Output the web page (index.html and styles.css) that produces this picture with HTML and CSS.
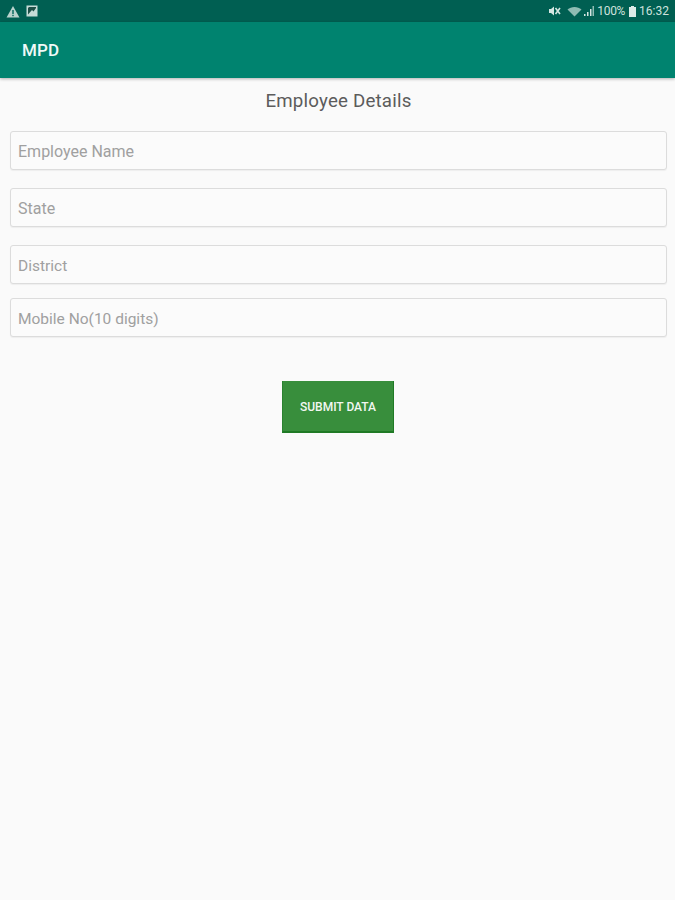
FILE: index.html
```html
<!DOCTYPE html>
<html lang="en">
<head>
<meta charset="utf-8">
<title>MPD</title>
<link rel="stylesheet" href="styles.css">
</head>
<body>
<div class="status">
  <div class="status-left">
    <svg class="ic" width="14" height="13" viewBox="0 0 14 13"><path d="M7 1 L13.5 12.5 H0.5 Z" fill="#b9d3cd"/><rect x="6.3" y="5" width="1.4" height="4" fill="#00665a"/><rect x="6.3" y="9.8" width="1.4" height="1.4" fill="#00665a"/></svg>
    <svg class="ic" width="12" height="12" viewBox="0 0 12 12"><rect x="0.5" y="0.5" width="11" height="11" fill="#c5dcd7"/><path d="M2 9.5 L6 5 L7.5 6.5 L10 3 V2 H3 L2 3 Z" fill="#1d4f47"/></svg>
  </div>
  <div class="status-right">
    <svg class="ic" width="13" height="12" viewBox="0 0 13 12"><path d="M1 4 H3 L6 1.5 V10.5 L3 8 H1 Z" fill="#d5e6e2"/><path d="M7.5 3 L12 9 M12 3 L7.5 9" stroke="#d5e6e2" stroke-width="1.6"/></svg>
    <svg class="ic wifi" width="15" height="11" viewBox="0 0 15 11"><path d="M0.5 3.5 C4 0 11 0 14.5 3.5 L7.5 10.5 Z" fill="#8fbcb3"/></svg>
    <svg class="ic signal" width="10" height="10" viewBox="0 0 10 10"><rect x="0" y="8" width="1.5" height="2" fill="#d5e6e2"/><rect x="3" y="6" width="1.5" height="4" fill="#d5e6e2"/><rect x="6" y="3" width="1.5" height="7" fill="#d5e6e2"/><rect x="8.5" y="0" width="1.5" height="10" fill="#8fbcb3"/></svg>
    <span class="pct">100%</span>
    <svg class="ic batt" width="7" height="11" viewBox="0 0 7 11"><path d="M2 0 H5 V1 H7 V11 H0 V1 H2 Z" fill="#dcebe8"/></svg>
    <span class="time">16:32</span>
  </div>
</div>
<header class="appbar"><span class="app-title">MPD</span></header>
<main class="content">
  <h1 class="heading">Employee Details</h1>
  <form class="form">
    <div class="field field-first">Employee Name</div>
    <div class="field field-wide">State</div>
    <div class="field field-wide field-small">District</div>
    <div class="field field-narrow field-small">Mobile No(10 digits)</div>
    <div class="actions"><button class="submit" type="button">SUBMIT DATA</button></div>
  </form>
</main>
</body>
</html>
```

FILE: styles.css
```css
* { box-sizing: border-box; }
html, body { margin: 0; height: 100%; }
body {
  width: 675px;
  height: 900px;
  overflow: hidden;
  background: #fafafa;
  font-family: Roboto, "Liberation Sans", sans-serif;
  display: flex;
  flex-direction: column;
}
.status {
  height: 22px;
  background: #005f52;
  display: flex;
  align-items: center;
  justify-content: space-between;
  padding: 0 6px;
  color: #cfe2dd;
  font-size: 12px;
  flex: none;
}
.status-left { display: flex; align-items: center; gap: 6px; }
.status-right { display: flex; align-items: center; gap: 3px; }
.ic { display: block; }
.wifi { margin-left: 3px; }
.signal { margin-left: -1px; }
.pct { letter-spacing: -0.3px; }
.batt { margin-left: 1px; }
.time { margin-left: 0; }
.appbar {
  height: 56px;
  background: #00836f;
  display: flex;
  align-items: center;
  padding: 0 22px;
  box-shadow: 0 1px 3px rgba(0, 0, 0, 0.3);
  flex: none;
  position: relative;
}
.app-title {
  color: #f0faf8;
  font-size: 17px;
  font-weight: 500;
  letter-spacing: 0.2px;
}
.content { flex: 1; padding: 12px 8px 0 10px; }
.heading {
  margin: 0;
  text-align: center;
  font-size: 18.7px;
  line-height: 22px;
  font-weight: 400;
  color: #5c5c5c;
  letter-spacing: 0.2px;
}
.form { display: flex; flex-direction: column; }
.field {
  height: 39px;
  border: 1px solid #dcdcdc;
  border-radius: 3px;
  background: #fbfbfb;
  box-shadow: 0 1px 1px rgba(0, 0, 0, 0.05);
  padding: 2px 7px 0;
  display: flex;
  align-items: center;
  font-size: 16px;
  color: #a0a0a0;
}
.field-small { font-size: 15.5px; }
.field-first { margin-top: 19px; }
.field-wide { margin-top: 18px; }
.field-narrow { margin-top: 14px; }
.actions { display: flex; justify-content: center; margin-top: 44px; padding-right: 1px; }
.submit {
  width: 112px;
  height: 52px;
  background: #388e3c;
  border: none;
  border-bottom: 2px solid #1f7a25;
  border-right: 1px solid #1f7a25;
  border-left: 1px solid #2a8230;
  color: #f2f7f2;
  font-family: inherit;
  font-size: 12px;
  font-weight: 500;
  padding: 2px 0 0;
}
```
